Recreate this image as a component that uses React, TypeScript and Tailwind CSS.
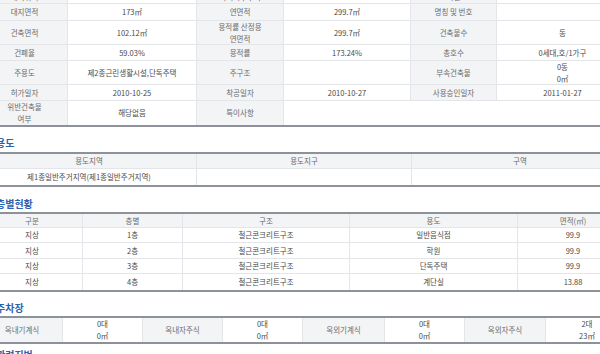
import React from "react";

type CellProps = {
  children?: React.ReactNode;
  label?: boolean;
  head?: boolean;
  span?: string;
  noB?: boolean;
  noR?: boolean;
  end?: boolean;
};

function Cell({ children, label, head, span = "", noB, noR, end }: CellProps) {
  const bg = label || head ? "bg-[#f3f4f6] text-[#6b6b6b]" : "bg-white text-[#4a4a4a]";
  return (
    <div
      className={`${bg} ${span} ${noB ? "" : "border-b"} ${noR ? "" : "border-r"} border-[#e3e5e8] flex ${end ? "items-end" : "items-center"} justify-center text-center leading-[12px] overflow-hidden`}
    >
      <div>{children}</div>
    </div>
  );
}

function Title({ children, pt = "pt-[9px]", h = "h-[25px]" }: { children: React.ReactNode; pt?: string; h?: string }) {
  return (
    <div className={`${h} ${pt} pl-[14px]`}>
      <div className="text-[10px] leading-[14px] font-bold text-[#2c62b0]">{children}</div>
    </div>
  );
}

export default function App() {
  return (
    <div className="w-[600px] h-[354px] overflow-hidden bg-white font-['Noto_Sans_CJK_KR','Noto_Sans',sans-serif] text-[7.5px]">
      <div className="w-[646px] -ml-[18px] -mt-[13px]">
        {/* Building info table */}
        <div className="grid grid-cols-[86px_129px_87px_127px_86px_131px] grid-rows-[17px_17px_24px_16px_24px_16px_24px] border-b-2 border-b-[#8d9199]">
          <Cell label end>대지위치</Cell>
          <Cell end></Cell>
          <Cell label end>지역지구구역</Cell>
          <Cell end></Cell>
          <Cell label end>지번</Cell>
          <Cell end noR></Cell>

          <Cell label>대지면적</Cell>
          <Cell>173㎡</Cell>
          <Cell label>연면적</Cell>
          <Cell>299.7㎡</Cell>
          <Cell label>명칭 및 번호</Cell>
          <Cell noR></Cell>

          <Cell label>건축면적</Cell>
          <Cell>102.12㎡</Cell>
          <Cell label>
            용적률 산정용
            <br />
            연면적
          </Cell>
          <Cell>299.7㎡</Cell>
          <Cell label>건축물수</Cell>
          <Cell noR>동</Cell>

          <Cell label>건폐율</Cell>
          <Cell>59.03%</Cell>
          <Cell label>용적률</Cell>
          <Cell>173.24%</Cell>
          <Cell label>총호수</Cell>
          <Cell noR>0세대,호/1가구</Cell>

          <Cell label>주용도</Cell>
          <Cell>제2종근린생활시설,단독주택</Cell>
          <Cell label>주구조</Cell>
          <Cell></Cell>
          <Cell label>부속건축물</Cell>
          <Cell noR>
            0동
            <br />
            0㎡
          </Cell>

          <Cell label>허가일자</Cell>
          <Cell>2010-10-25</Cell>
          <Cell label>착공일자</Cell>
          <Cell>2010-10-27</Cell>
          <Cell label>사용승인일자</Cell>
          <Cell noR>2011-01-27</Cell>

          <Cell label noB>
            위반건축물
            <br />
            여부
          </Cell>
          <Cell noB>해당없음</Cell>
          <Cell label noB>특이사항</Cell>
          <Cell noB noR span="col-span-3"></Cell>
        </div>

        {/* 용도 */}
        <Title>용도</Title>
        <div className="grid grid-cols-[215px_215px_216px] grid-rows-[15px_16px] border-t-2 border-t-[#8d9199] border-b-2 border-b-[#8d9199]">
          <Cell head>용도지역</Cell>
          <Cell head>용도지구</Cell>
          <Cell head noR>구역</Cell>
          <Cell noB>제1종일반주거지역(제1종일반주거지역)</Cell>
          <Cell noB></Cell>
          <Cell noB noR></Cell>
        </div>

        {/* 층별현황 */}
        <Title pt="pt-[10px]">층별현황</Title>
        <div className="grid grid-cols-[101px_100px_167px_168px_110px] grid-rows-[14px_15px_16px_15px_16px] border-t-2 border-t-[#8d9199] border-b-2 border-b-[#8d9199]">
          <Cell head>구분</Cell>
          <Cell head>층별</Cell>
          <Cell head>구조</Cell>
          <Cell head>용도</Cell>
          <Cell head noR>면적(㎡)</Cell>

          <Cell>지상</Cell>
          <Cell>1층</Cell>
          <Cell>철근콘크리트구조</Cell>
          <Cell>일반음식점</Cell>
          <Cell noR>99.9</Cell>

          <Cell>지상</Cell>
          <Cell>2층</Cell>
          <Cell>철근콘크리트구조</Cell>
          <Cell>학원</Cell>
          <Cell noR>99.9</Cell>

          <Cell>지상</Cell>
          <Cell>3층</Cell>
          <Cell>철근콘크리트구조</Cell>
          <Cell>단독주택</Cell>
          <Cell noR>99.9</Cell>

          <Cell noB>지상</Cell>
          <Cell noB>4층</Cell>
          <Cell noB>철근콘크리트구조</Cell>
          <Cell noB>계단실</Cell>
          <Cell noB noR>13.88</Cell>
        </div>

        {/* 주차장 */}
        <Title h="h-[24px]">주차장</Title>
        <div className="grid grid-cols-[81px_80px_80px_80px_82px_80px_81px_82px] grid-rows-[24px] border-t-2 border-t-[#8d9199] border-b-2 border-b-[#8d9199]">
          <Cell label noB>옥내기계식</Cell>
          <Cell noB>
            0대
            <br />
            0㎡
          </Cell>
          <Cell label noB>옥내자주식</Cell>
          <Cell noB>
            0대
            <br />
            0㎡
          </Cell>
          <Cell label noB>옥외기계식</Cell>
          <Cell noB>
            0대
            <br />
            0㎡
          </Cell>
          <Cell label noB>옥외자주식</Cell>
          <Cell noB noR>
            2대
            <br />
            23㎡
          </Cell>
        </div>

        <Title pt="pt-[4px]">관련지번</Title>
      </div>
    </div>
  );
}
